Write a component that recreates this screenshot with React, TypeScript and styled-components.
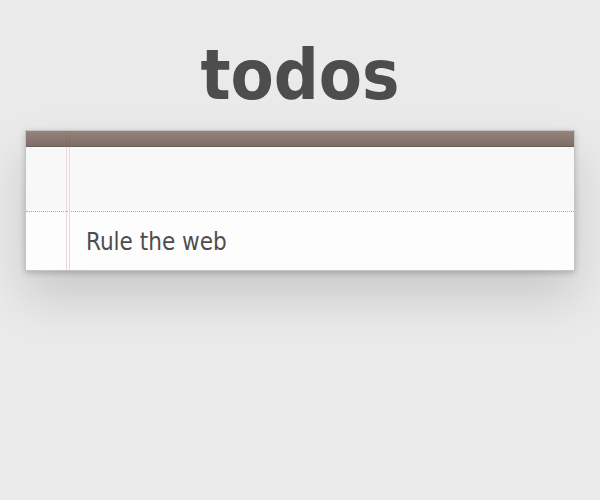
import React from "react";
import styled, { createGlobalStyle } from "styled-components";

const GlobalStyle = createGlobalStyle`
  html, body {
    margin: 0;
    padding: 0;
  }
  body {
    background: #eaeaea;
    color: #4d4d4d;
    font: 14px "DejaVu Sans Condensed", "DejaVu Sans", sans-serif;
    line-height: 1.4em;
    min-height: 500px;
  }
`;

const Page = styled.section`
  width: 550px;
  margin: 0 auto;
  padding-bottom: 40px;
`;

const Title = styled.h1`
  margin: 0;
  padding: 40px 0 20px;
  font-size: 70px;
  line-height: 70px;
  font-weight: bold;
  text-align: center;
  color: #4d4d4d;
`;

const TodoApp = styled.div`
  position: relative;
  background: rgba(255, 255, 255, 0.9);
  border: 1px solid #c4c4c4;
  box-shadow: 0 2px 6px rgba(0, 0, 0, 0.2), 0 25px 50px rgba(0, 0, 0, 0.15);

  &::before {
    content: "";
    position: absolute;
    top: 0;
    left: 40px;
    width: 2px;
    height: 100%;
    border-left: 1px solid #f5d6d6;
    border-right: 1px solid #f5d6d6;
    z-index: 1;
    pointer-events: none;
  }
`;

const Header = styled.header`
  display: flex;
  flex-direction: column;
`;

const HeaderBar = styled.div`
  position: relative;
  z-index: 2;
  height: 15px;
  border-bottom: 1px solid #6c615c;
  background: linear-gradient(to bottom, rgba(132, 110, 100, 0.85), rgba(101, 84, 76, 0.85));
`;

const NewTodo = styled.input`
  display: block;
  margin: 0;
  width: 100%;
  box-sizing: border-box;
  font-size: 24px;
  font-family: inherit;
  height: 64px;
  padding: 16px 16px 16px 60px;
  border: none;
  outline: none;
  color: inherit;
  background: rgba(0, 0, 0, 0.02);
`;

const Main = styled.section`
  border-top: 1px dotted #adadad;
`;

const TodoList = styled.ul`
  margin: 0;
  padding: 0;
  list-style: none;
`;

const TodoItem = styled.li`
  font-size: 24px;
`;

const Label = styled.label`
  display: block;
  margin-left: 45px;
  padding: 16px 60px 13px 15px;
  line-height: 1.2;
  white-space: pre;
`;

export default function App() {
  return (
    <>
      <GlobalStyle />
      <Page>
        <Title>todos</Title>
        <TodoApp>
          <Header>
            <HeaderBar />
            <NewTodo aria-label="New todo" />
          </Header>
          <Main>
            <TodoList>
              <TodoItem>
                <Label>Rule the web</Label>
              </TodoItem>
            </TodoList>
          </Main>
        </TodoApp>
      </Page>
    </>
  );
}
